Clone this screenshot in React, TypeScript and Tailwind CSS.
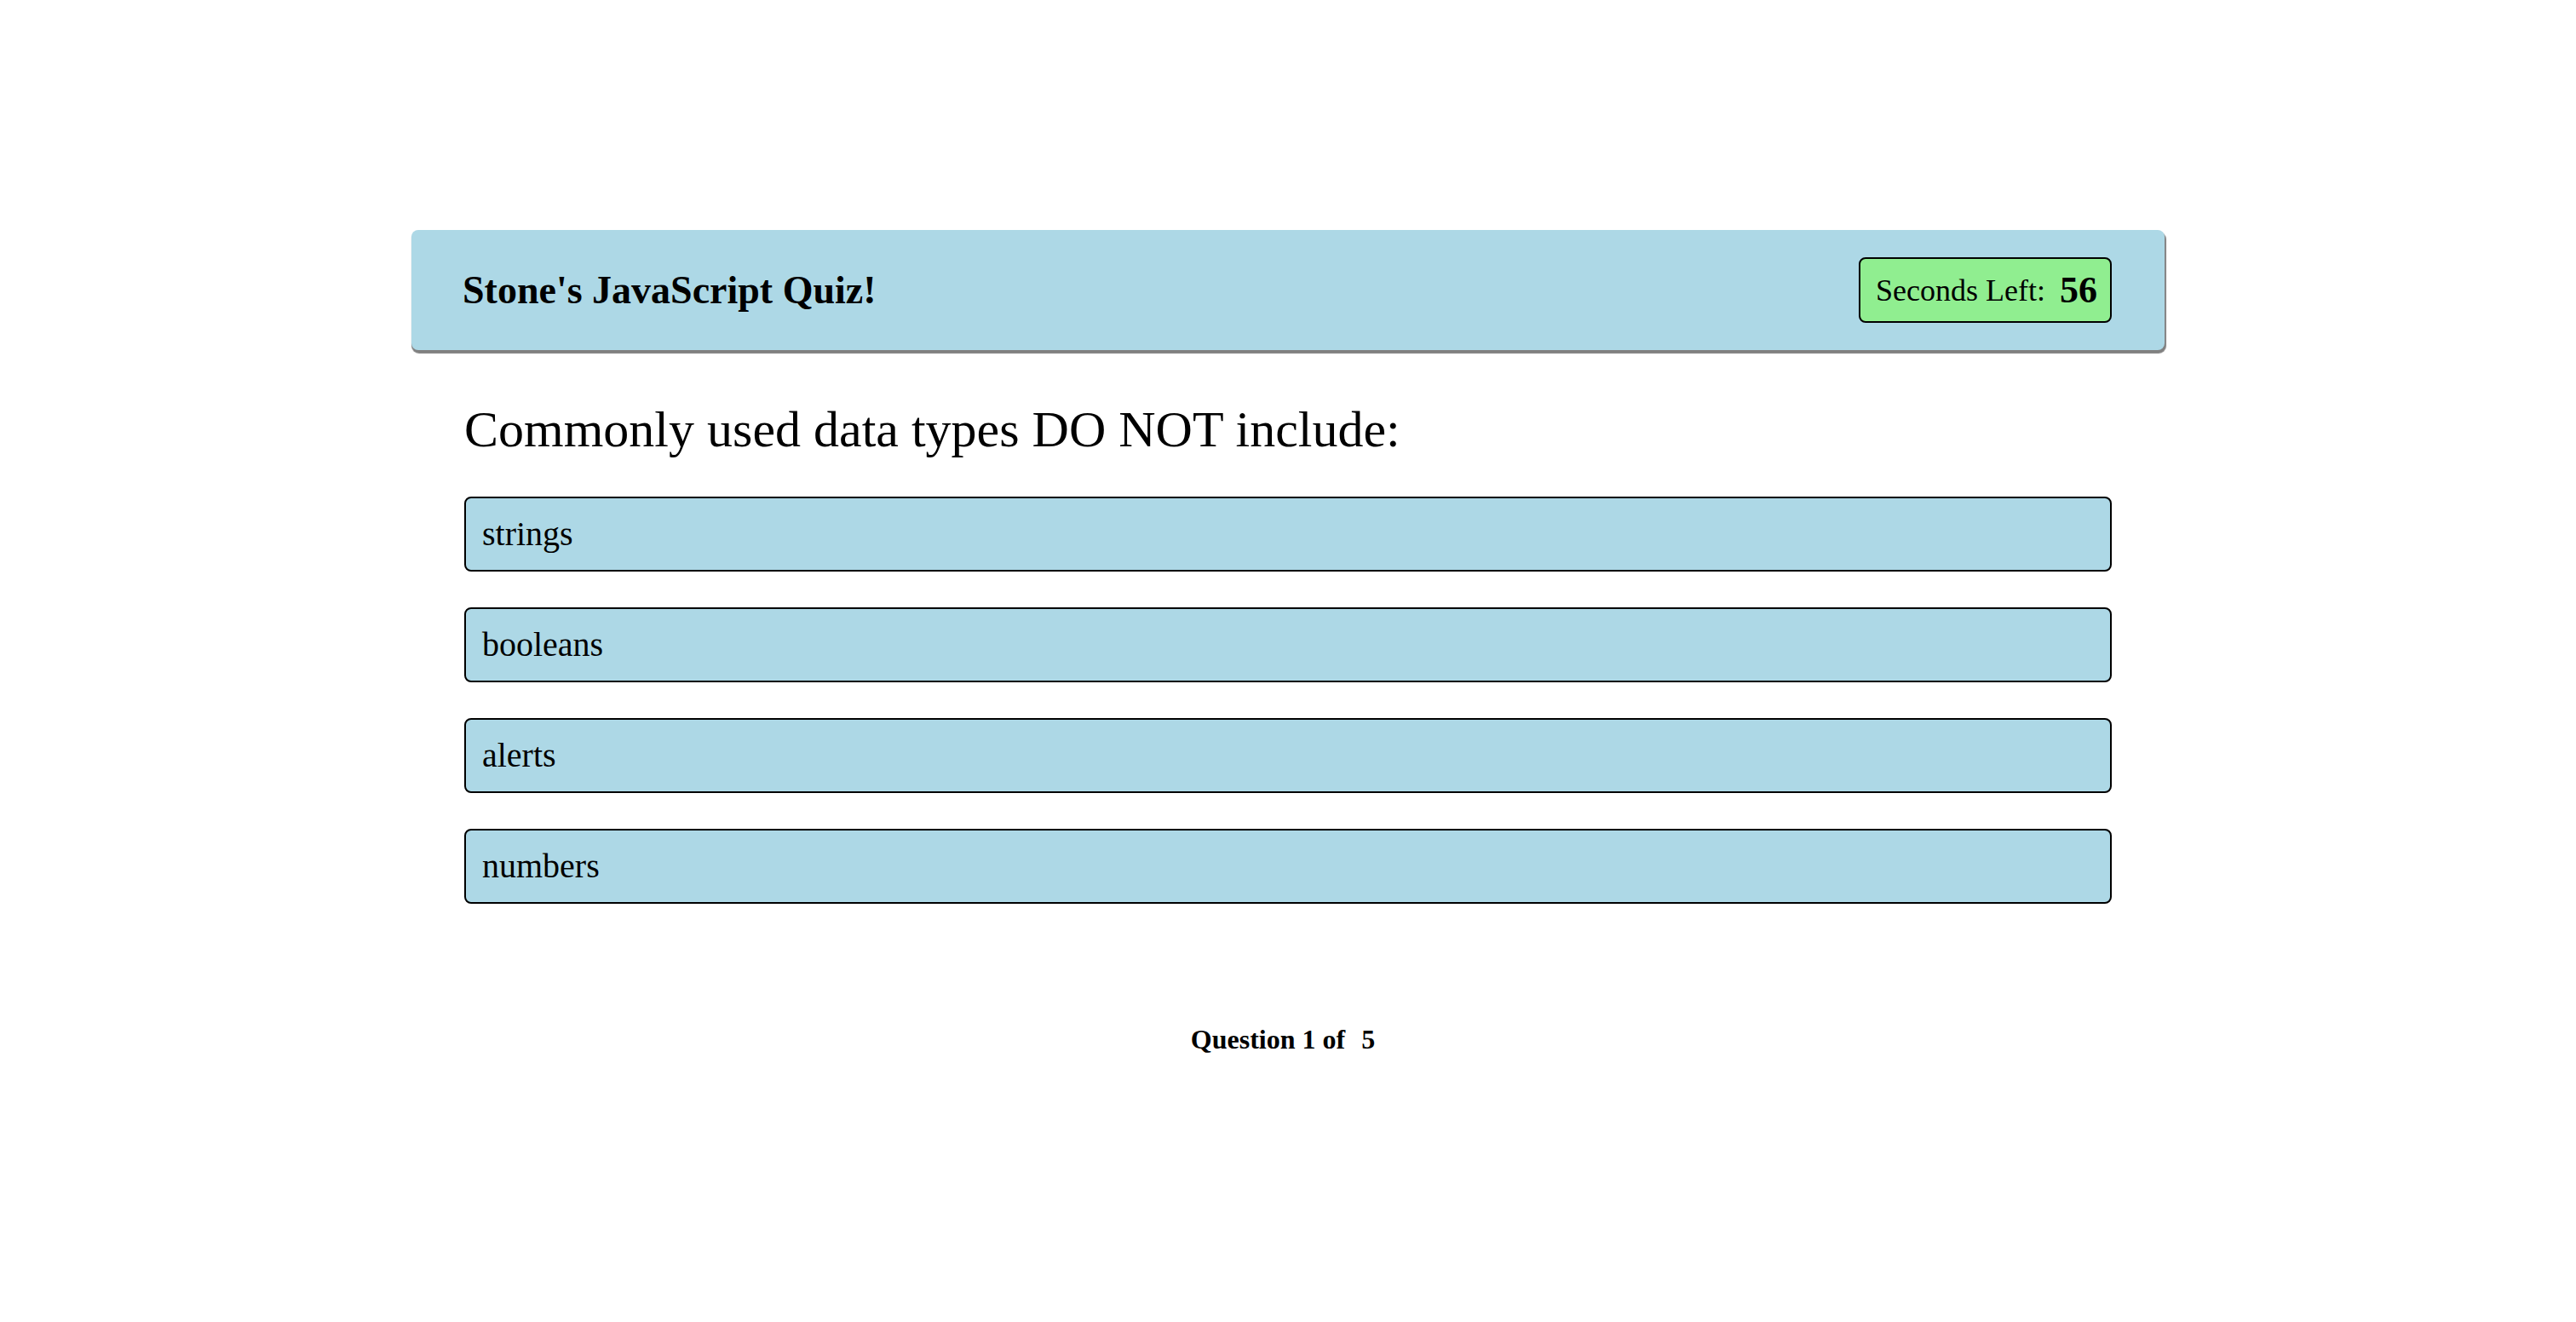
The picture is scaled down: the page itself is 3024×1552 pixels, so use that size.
const options = ['strings', 'booleans', 'alerts', 'numbers']

export default function App() {
  return (
    <div className="min-h-screen bg-white text-black font-['Liberation_Serif',_'Times_New_Roman',_serif]">
      <div className="mx-auto w-[2058px] pt-[270px]">
        {/* header */}
        <header className="flex h-[141px] items-center justify-between rounded-[8px] bg-[#add8e6] pl-[60px] pr-[62px] shadow-[1px_3px_1px_1px_#808080]">
          <h1 className="text-[46px] font-bold leading-none">Stone's JavaScript Quiz!</h1>
          <div className="flex h-[77px] w-[297px] items-center rounded-[8px] border-2 border-black bg-[#90ee90] pl-[18px]">
            <span className="text-[36px]">Seconds Left:</span>
            <span className="ml-[17px] text-[44px] font-bold">56</span>
          </div>
        </header>

        <main className="px-[62px]">
          <h2 className="mt-[59px] mb-[44px] text-[60px] leading-[69px]">Commonly used data types DO NOT include:</h2>
          <div className="flex flex-col gap-[42px]">
            {options.map((opt) => (
              <button
                key={opt}
                className="flex h-[88px] w-full items-center rounded-[8px] border-2 border-black bg-[#add8e6] pl-[19px] text-left text-[40px]"
              >
                {opt}
              </button>
            ))}
          </div>
        </main>

        <footer className="mt-[141px] pr-[12px] text-center text-[32px] font-bold leading-[37px]">
          Question 1 of<span className="ml-[19px]">5</span>
        </footer>
      </div>
    </div>
  )
}
